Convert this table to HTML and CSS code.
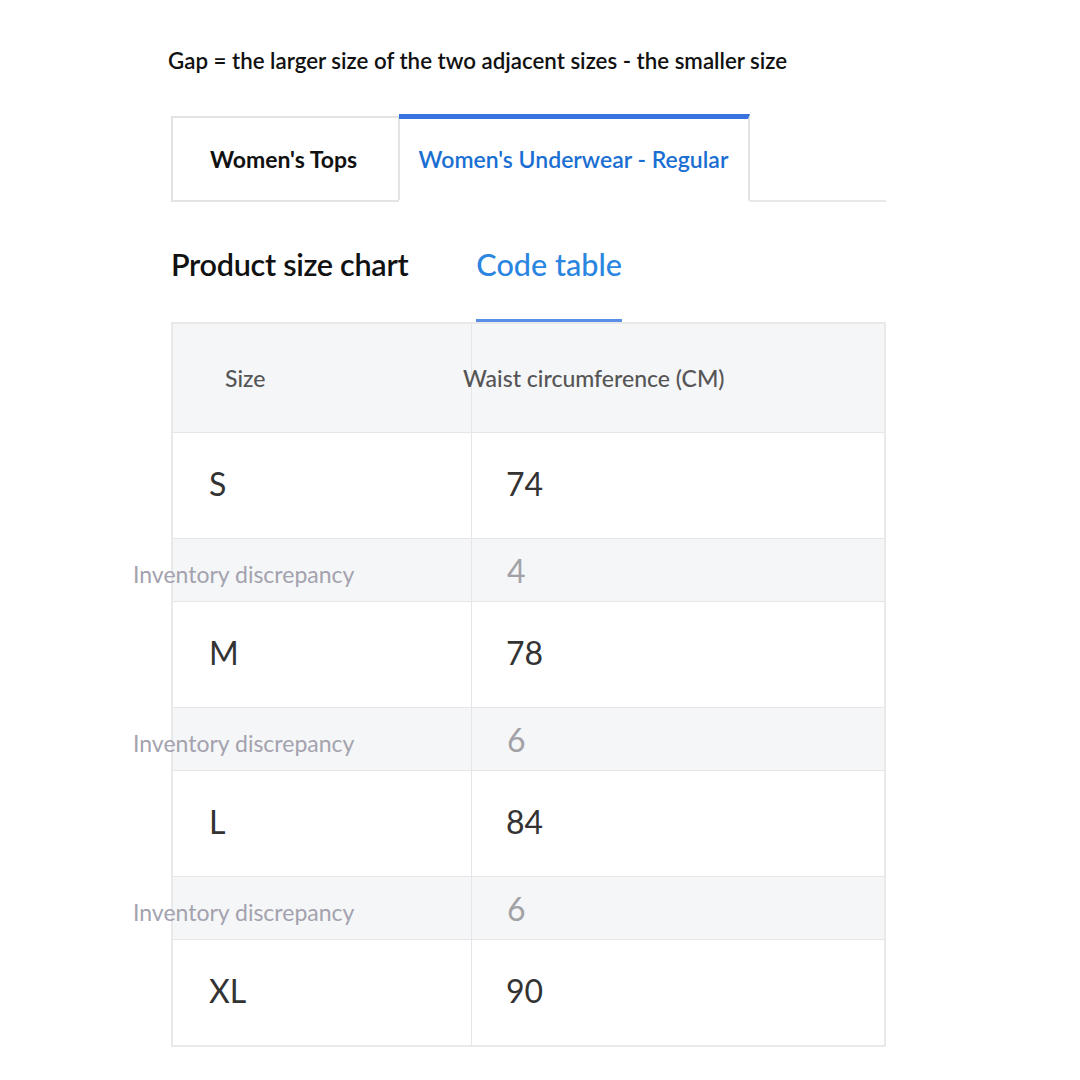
FILE: index.html
```html
<!DOCTYPE html>
<html lang="en">
<head>
  <meta charset="UTF-8" />
  <meta name="viewport" content="width=device-width, initial-scale=1.0" />
  <title>Size Chart</title>
  <link rel="stylesheet" href="styles.css">
</head>
<body>
  <div class="page">
    <p class="note">Gap = the larger size of the two adjacent sizes - the smaller size</p>

    <div class="tabs">
      <div class="tab">Women's Tops</div>
      <div class="tab active">Women's Underwear - Regular</div>
      <div class="tab-fill"></div>
    </div>

    <div class="subtabs">
      <div class="subtab">Product size chart</div>
      <div class="subtab active">Code table</div>
    </div>

    <table class="chart">
      <thead>
        <tr><th class="c1">Size</th><th class="c2"><span>Waist circumference (CM)</span></th></tr>
      </thead>
      <tbody>
        <tr class="size"><td>S</td><td>74</td></tr>
        <tr class="gap"><td><span>Inventory discrepancy</span></td><td>4</td></tr>
        <tr class="size"><td>M</td><td>78</td></tr>
        <tr class="gap"><td><span>Inventory discrepancy</span></td><td>6</td></tr>
        <tr class="size"><td>L</td><td>84</td></tr>
        <tr class="gap"><td><span>Inventory discrepancy</span></td><td>6</td></tr>
        <tr class="size"><td>XL</td><td>90</td></tr>
      </tbody>
    </table>
  </div>
</body>
</html>
```

FILE: styles.css
```css
body { margin: 0; background: #fff; font-family: Lato, "Open Sans", sans-serif; color: #111; }
.page { padding: 47px 0 0 171px; width: 715px; }

.note { margin: 0 0 0 -3px; font-size: 22.3px; font-weight: 600; white-space: nowrap; }

.tabs { display: flex; align-items: flex-end; margin-top: 40px; }
.tab { display: flex; align-items: center; justify-content: center; font-size: 23px; font-weight: 700; border: 2px solid #e3e3e3; box-sizing: border-box; }
.tab:first-child { width: 229px; height: 86px; padding-right: 4px; }
.tab.active { width: 351px; height: 88px; margin-left: -1px; color: #1b6fd2; font-weight: 600; border-top: 5px solid #3a72e0; border-left: none; border-bottom-color: #fff; padding-bottom: 2px; }
.tab-fill { flex: 1; border-bottom: 2px solid #e8e8e8; }

.subtabs { display: flex; gap: 68px; margin-top: 44px; }
.subtab { font-size: 30.6px; font-weight: 600; padding-bottom: 36px; border-bottom: 3px solid transparent; letter-spacing: -0.3px; }
.subtab.active { color: #2a86e0; font-weight: 500; border-bottom-color: #5b8ee6; letter-spacing: 0; }

.chart { border-collapse: collapse; width: 715px; margin-top: 0; border: 2px solid #e9e9ea; }
.chart th, .chart td { border: 1px solid #e6e6e8; text-align: left; padding: 0; }
.chart th { height: 108px; background: #f5f6f8; font-size: 23px; font-weight: 500; color: #555; }
.chart .c1 { width: 246px; padding-left: 52px; }
.chart .c2 span { margin-left: -9px; }
.chart tr.size td { height: 101px; font-size: 32px; color: #333; padding-bottom: 4px; }
.chart tr.size td:first-child { padding-left: 36px; }
.chart tr.size td:last-child { padding-left: 34px; }
.chart tr.gap td { height: 62px; background: #f5f6f7; font-size: 32px; color: #a2a2a6; }
.chart tr.gap td span { margin-left: -40px; font-size: 23px; color: #a3a2ae; }
.chart tr.gap td:last-child { padding-left: 35px; }
```
